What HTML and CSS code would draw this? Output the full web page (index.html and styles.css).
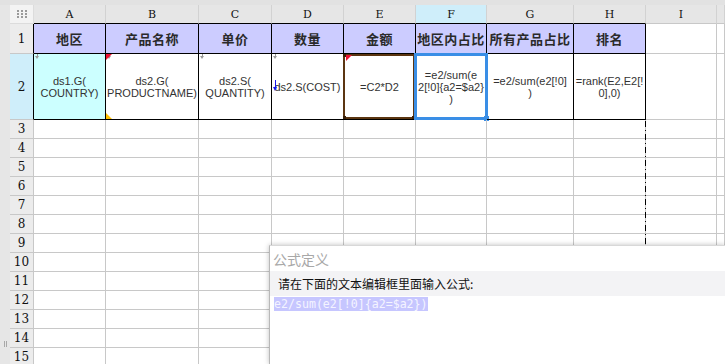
FILE: index.html
```html
<!DOCTYPE html>
<html lang="zh-CN">
<head>
  <meta charset="UTF-8" />
  <title>报表设计 - 公式定义</title>
  <link rel="stylesheet" href="styles.css">
</head>
<body>
  <div class="sheet" id="sheet">
    <div class="top-strip"></div>
    <div class="side-strip"><span class="grip"></span></div>

    <!-- column headers -->
    <div class="cell corner">
      <svg width="10" height="8" viewBox="0 0 10 8">
        <g fill="#9a9a9a">
          <rect x="0" y="0" width="2" height="2"/><rect x="4" y="0" width="2" height="2"/><rect x="8" y="0" width="2" height="2"/>
          <rect x="0" y="3" width="2" height="2"/><rect x="4" y="3" width="2" height="2"/><rect x="8" y="3" width="2" height="2"/>
          <rect x="0" y="6" width="2" height="2"/><rect x="4" y="6" width="2" height="2"/><rect x="8" y="6" width="2" height="2"/>
        </g>
      </svg>
    </div>
    <div class="cell col-head in-table">A</div>
    <div class="cell col-head in-table">B</div>
    <div class="cell col-head in-table">C</div>
    <div class="cell col-head in-table">D</div>
    <div class="cell col-head in-table">E</div>
    <div class="cell col-head in-table active">F</div>
    <div class="cell col-head in-table">G</div>
    <div class="cell col-head in-table">H</div>
    <div class="cell col-head">I</div>
    <div class="cell col-head"></div>

    <!-- row 1 -->
    <div class="cell row-head edge">1</div>
    <div class="cell title-cell">地区</div>
    <div class="cell title-cell">产品名称</div>
    <div class="cell title-cell">单价</div>
    <div class="cell title-cell">数量</div>
    <div class="cell title-cell">金额</div>
    <div class="cell title-cell">地区内占比</div>
    <div class="cell title-cell">所有产品占比</div>
    <div class="cell title-cell">排名</div>
    <div class="cell"></div>
    <div class="cell"></div>

    <!-- row 2 -->
    <div class="cell row-head edge active">2</div>
    <div class="cell data-cell group">
      <span class="expand"></span>
      ds1.G(<br>COUNTRY)
    </div>
    <div class="cell data-cell">
      <span class="flag"></span><span class="expand"></span>
      ds2.G(<br>PRODUCTNAME)
      <span class="filter"></span>
    </div>
    <div class="cell data-cell">
      <span class="expand"></span>
      ds2.S(<br>QUANTITY)
    </div>
    <div class="cell data-cell">
      <span class="expand"></span>
      <span class="down-arrow"></span>
      ds2.S(COST)
    </div>
    <div class="cell data-cell">
      <span class="bordered"><i class="dot tl"></i><i class="dot bl"></i><i class="dot br"></i></span>
      <span class="flag inner"></span>
      =C2*D2
    </div>
    <div class="cell data-cell">
      <span class="selection"></span>
      =e2/sum(e<br>2[!0]{a2=$a2}<br>)
    </div>
    <div class="cell data-cell">=e2/sum(e2[!0]<br>)</div>
    <div class="cell data-cell">=rank(E2,E2[!<br>0],0)</div>
    <div class="cell"></div>
    <div class="cell"></div>
  </div>

  <div class="page-break"></div>

  <div class="dialog">
    <div class="dialog-title">公式定义</div>
    <div class="dialog-hint">请在下面的文本编辑框里面输入公式:</div>
    <div class="dialog-editor"><span class="selected">e2/sum(e2[!0]{a2=$a2})</span></div>
  </div>

  <script>
    // empty rows 3..15
    const sheet = document.getElementById('sheet');
    for (let r = 3; r <= 15; r++) {
      const head = document.createElement('div');
      head.className = 'cell row-head';
      head.textContent = r;
      sheet.appendChild(head);
      for (let c = 0; c < 10; c++) {
        const cell = document.createElement('div');
        cell.className = 'cell';
        sheet.appendChild(cell);
      }
    }
  </script>
</body>
</html>
```

FILE: styles.css
```css
:root {
  --grid: #c8c8c8;
  --head-bg: #e6e6e6;
  --title-bg: #ccccff;
  --group-bg: #ccffff;
  --active-bg: #cfeefa;
  --select: #3a8ee6;
}

* {
  box-sizing: border-box;
  margin: 0;
  padding: 0;
}

body {
  width: 725px;
  height: 364px;
  overflow: hidden;
  position: relative;
  background: #fff;
  font-family: "Liberation Sans", Arial, sans-serif;
  color: #222;
}

.sheet {
  display: grid;
  grid-template-columns: 10px 24px 72px 93px 73px 72px 72px 71px 87px 72px 71px 1fr;
  grid-template-rows: 5px 19px 30px 66px repeat(13, 19px);
}

.top-strip {
  grid-row: 1;
  grid-column: 1 / -1;
  background: #e2e2e2;
}

.side-strip {
  grid-row: 2 / -1;
  grid-column: 1;
  background: #e6e6e6;
  display: flex;
  align-items: flex-end;
  justify-content: center;
  padding-bottom: 20px;
}

.grip {
  width: 3px;
  height: 6px;
  border-left: 1px solid #a8a8a8;
  border-right: 1px solid #a8a8a8;
}

.cell {
  border-right: 1px solid var(--grid);
  border-bottom: 1px solid var(--grid);
  position: relative;
}

.corner {
  background: #f3f3f3;
  display: flex;
  align-items: center;
  justify-content: center;
  border-color: #dcdcdc;
}

.col-head {
  background: var(--head-bg);
  font-family: "DejaVu Serif", "Liberation Serif", serif;
  font-size: 11px;
  display: flex;
  align-items: center;
  justify-content: center;
  color: #111;
  border-right-color: #d2d2d2;
}

.col-head.in-table {
  border-bottom-color: #000;
}

.row-head {
  background: #ececec;
  font-family: "DejaVu Serif", "Liberation Serif", serif;
  font-size: 12px;
  display: flex;
  align-items: center;
  justify-content: center;
  color: #111;
}

.row-head.edge {
  border-right-color: #000;
}

.active {
  background: var(--active-bg);
}

.title-cell {
  background: var(--title-bg);
  border-color: #000;
  font-family: "Noto Sans CJK SC", sans-serif;
  font-weight: bold;
  font-size: 13px;
  letter-spacing: 0.5px;
  display: flex;
  align-items: center;
  justify-content: center;
  color: #2a2a2a;
}

.data-cell {
  border-color: #000;
  font-size: 11px;
  line-height: 12px;
  display: flex;
  align-items: center;
  justify-content: center;
  text-align: center;
  color: #333;
}

.data-cell.group {
  background: var(--group-bg);
}

/* cell markers */
.expand {
  position: absolute;
  left: 1px;
  top: 0;
  width: 5px;
  height: 5px;
  background: linear-gradient(#999, #999) center top / 1px 3px no-repeat;
}

.expand::after {
  content: '';
  position: absolute;
  left: 0;
  top: 2px;
  border-left: 2.5px solid transparent;
  border-right: 2.5px solid transparent;
  border-top: 3px solid #999;
}

.flag {
  position: absolute;
  left: 0;
  top: 0;
  border-top: 6px solid #ee1133;
  border-right: 6px solid transparent;
  z-index: 1;
}

.flag.inner {
  left: 2px;
  top: 1px;
}

.filter {
  position: absolute;
  left: 0;
  bottom: 0;
  border-bottom: 6px solid #ffc000;
  border-right: 6px solid transparent;
}

.down-arrow {
  position: absolute;
  left: 1px;
  top: 26px;
  width: 5px;
  height: 11px;
  background: linear-gradient(#1a1aee, #1a1aee) center top / 1px 8px no-repeat;
}

.down-arrow::after {
  content: '';
  position: absolute;
  left: 0;
  bottom: 0;
  border-left: 2.5px solid transparent;
  border-right: 2.5px solid transparent;
  border-top: 4px solid #1a1aee;
}

.bordered {
  position: absolute;
  left: -1px;
  top: 0;
  right: 0;
  bottom: 0;
  border: 2px solid #5b3511;
}

.dot {
  position: absolute;
  width: 3px;
  height: 3px;
  background: #3a2008;
}

.dot.tl { left: -2px; top: -2px; }
.dot.bl { left: -2px; bottom: -2px; }
.dot.br { right: -2px; bottom: -2px; }

.selection {
  position: absolute;
  left: -2px;
  top: -1px;
  right: -2px;
  bottom: -1px;
  border: 3px solid var(--select);
}

.selection::after {
  content: '';
  position: absolute;
  right: -4px;
  bottom: -4px;
  width: 5px;
  height: 5px;
  background: var(--select);
}

/* page break marker */
.page-break {
  position: absolute;
  left: 645px;
  top: 121px;
  width: 1px;
  height: 124px;
  background: repeating-linear-gradient(#000 0 6px, transparent 6px 9px, #000 9px 10px, transparent 10px 13px);
}

/* formula dialog */
.dialog {
  position: absolute;
  left: 269px;
  top: 245px;
  right: 0;
  bottom: 0;
  background: #fff;
  border-left: 1px solid #b8b8b8;
  border-top: 1px solid #d8d8d8;
  box-shadow: 0 0 5px rgba(0, 0, 0, 0.25);
}

.dialog-title {
  height: 25px;
  padding: 4px 0 0 3px;
  font-family: "Noto Sans CJK SC", sans-serif;
  font-size: 14px;
  line-height: 18px;
  color: #a8a8a8;
}

.dialog-hint {
  height: 25px;
  background: #f3f3f5;
  padding: 4px 0 0 8px;
  font-family: "Noto Sans CJK SC", sans-serif;
  font-size: 12px;
  line-height: 17px;
  color: #111;
}

.dialog-editor {
  padding: 1px 0 0 4px;
  font-family: "DejaVu Sans Mono", monospace;
  font-size: 11.6px;
  line-height: 14px;
}

.selected {
  background: #c6c6ff;
  color: #f4f4ff;
}
```
